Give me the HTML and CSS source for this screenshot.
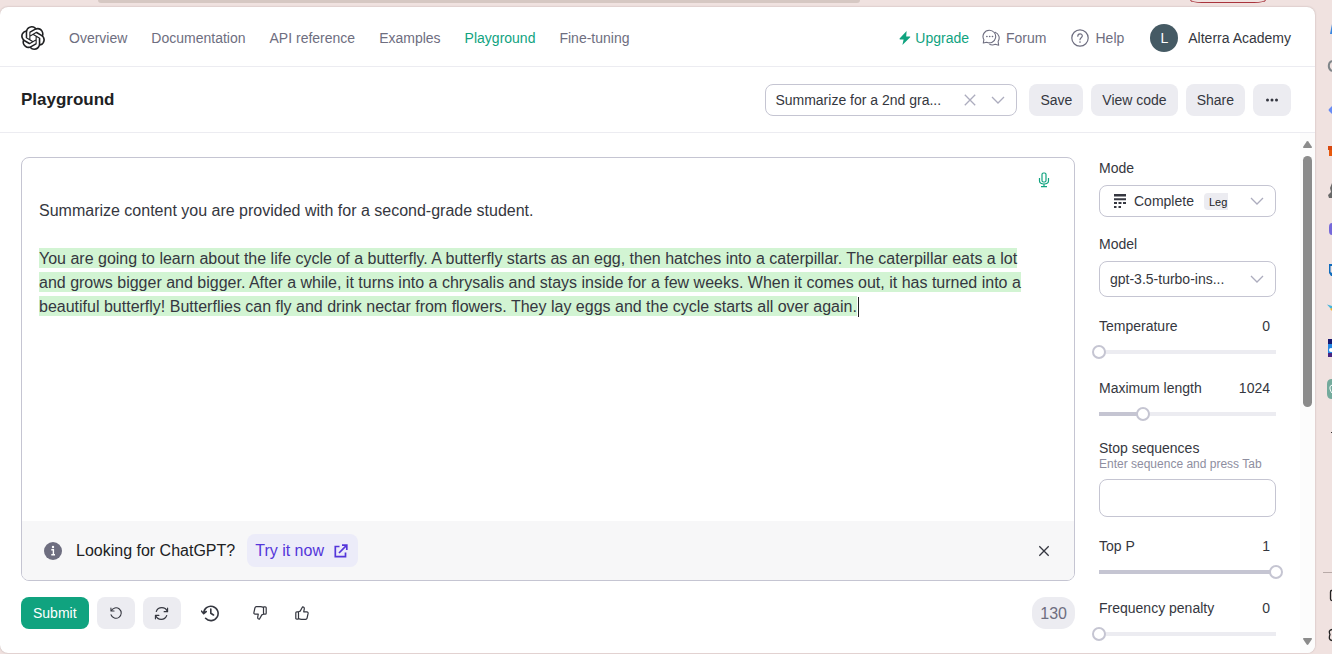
FILE: index.html
```html
<!DOCTYPE html>
<html lang="en">
<head>
<meta charset="utf-8">
<title>Playground</title>
<link rel="stylesheet" href="styles.css">
</head>
<body>
<div class="chrome-top"><span class="address-edge"></span><span class="profile-edge"></span></div>
<div class="frame">
<div class="app">
  <header class="topnav">
    <a class="logo" href="#" aria-label="Home"><svg width="24" height="24" viewBox="0 0 24 24" fill="#202123"><path d="M22.2819 9.8211a5.9847 5.9847 0 0 0-.5157-4.9108 6.0462 6.0462 0 0 0-6.5098-2.9A6.0651 6.0651 0 0 0 4.9807 4.1818a5.9847 5.9847 0 0 0-3.9977 2.9 6.0462 6.0462 0 0 0 .7427 7.0966 5.98 5.98 0 0 0 .511 4.9107 6.051 6.051 0 0 0 6.5146 2.9001A5.9847 5.9847 0 0 0 13.2599 24a6.0557 6.0557 0 0 0 5.7718-4.2058 5.9894 5.9894 0 0 0 3.9977-2.9001 6.0557 6.0557 0 0 0-.7475-7.0729zm-9.022 12.6081a4.4755 4.4755 0 0 1-2.8764-1.0408l.1419-.0804 4.7783-2.7582a.7948.7948 0 0 0 .3927-.6813v-6.7369l2.02 1.1686a.071.071 0 0 1 .038.052v5.5826a4.504 4.504 0 0 1-4.4945 4.4944zm-9.6607-4.1254a4.4708 4.4708 0 0 1-.5346-3.0137l.142.0852 4.783 2.7582a.7712.7712 0 0 0 .7806 0l5.8428-3.3685v2.3324a.0804.0804 0 0 1-.0332.0615L9.74 19.9502a4.4992 4.4992 0 0 1-6.1408-1.6464zM2.3408 7.8956a4.485 4.485 0 0 1 2.3655-1.9728V11.6a.7664.7664 0 0 0 .3879.6765l5.8144 3.3543-2.0201 1.1685a.0757.0757 0 0 1-.071 0l-4.8303-2.7865A4.504 4.504 0 0 1 2.3408 7.872zm16.5963 3.8558L13.1038 8.364 15.1192 7.2a.0757.0757 0 0 1 .071 0l4.8303 2.7913a4.4944 4.4944 0 0 1-.6765 8.1042v-5.6772a.79.79 0 0 0-.407-.667zm2.0107-3.0231l-.142-.0852-4.7735-2.7818a.7759.7759 0 0 0-.7854 0L9.409 9.2297V6.8974a.0662.0662 0 0 1 .0284-.0615l4.8303-2.7866a4.4992 4.4992 0 0 1 6.6802 4.66zM8.3065 12.863l-2.02-1.1638a.0804.0804 0 0 1-.038-.0567V6.0742a4.4992 4.4992 0 0 1 7.3757-3.4537l-.142.0805L8.704 5.459a.7948.7948 0 0 0-.3927.6813zm1.0976-2.3654l2.602-1.4998 2.6069 1.4998v2.9994l-2.5974 1.4997-2.6067-1.4997Z"/></svg></a>
    <nav class="links">
      <a href="#">Overview</a>
      <a href="#">Documentation</a>
      <a href="#">API reference</a>
      <a href="#">Examples</a>
      <a href="#" class="current" aria-current="page">Playground</a>
      <a href="#">Fine-tuning</a>
    </nav>
    <div class="account">
      <a href="#" class="upgrade"><svg width="12" height="14" viewBox="0 0 12 14" fill="#10a37f"><path d="M7.6 0 0.6 7.6Q.2 8.3 1 8.4H4.6L3.4 14 11.2 6.3Q11.6 5.6 10.8 5.5H7.2Z"/></svg>Upgrade</a>
      <a href="#" class="forum"><svg width="18" height="18" viewBox="0 0 18 18" fill="none" stroke="#6e6e80" stroke-width="1.1" stroke-linejoin="round" stroke-linecap="round"><path d="M7.3 1.2a6.3 6.3 0 1 1-2.6 12L1.3 14 1.9 10.700A6.300 6.300 0 0 1 7.300 1.200Z"/><path d="M13.100 3.200A6.200 6.200 0 0 1 16.100 12.500L16.700 16.300 13.300 15.300A7 7 0 0 1 7.800 15.600"/><path d="M4.800 7.400h.2M7.600 7.400h.2M10.400 7.400h.2" stroke-width="1.500"/></svg>Forum</a>
      <a href="#" class="help"><svg width="18" height="18" viewBox="0 0 18 18" fill="none" stroke="#6e6e80" stroke-width="1.200" stroke-linecap="round"><circle cx="9" cy="9" r="8.200"/><path d="M6.800 7.200C6.800 4 11.400 4.200 11.300 7 11.200 8.800 9 8.700 9 10.700"/><path d="M9 13v.1" stroke-width="1.600"/></svg>Help</a>
      <a href="#" class="user"><span class="avatar">L</span>Alterra Academy</a>
    </div>
  </header>

  <div class="toolbar">
    <h1>Playground</h1>
    <div class="box preset">
      <select aria-label="Preset"><option>Summarize for a 2nd gra...</option></select>
      <button class="bare" aria-label="Clear preset"><svg width="12" height="12" viewBox="0 0 12 12" fill="none" stroke="#acacbe" stroke-width="1.300"><path d="M.8.8 11.200 11.200M11.200.8.8 11.200"/></svg></button>
      <svg class="chevron" width="14" height="8" viewBox="0 0 14 8"><path d="M1 1 7 7 13 1"/></svg>
    </div>
    <button class="btn">Save</button>
    <button class="btn">View code</button>
    <button class="btn">Share</button>
    <button class="btn square" aria-label="More"><svg width="14" height="4" viewBox="0 0 14 4" fill="#353740"><circle cx="2.500" cy="2" r="1.500"/><circle cx="7" cy="2" r="1.500"/><circle cx="11.500" cy="2" r="1.500"/></svg></button>
  </div>

  <div class="body">
    <main class="work">
      <div class="editor">
        <button class="bare mic" aria-label="Dictate"><svg width="12" height="16" viewBox="0 0 12 16" fill="none" stroke="#10a37f" stroke-width="1.200"><rect x="4" y="1" width="4" height="9" rx="1.500"/><path d="M1.500 6v2.800Q1.500 12 6 12T10.500 8.800V6M6 12v2.500M3 14.700h6"/></svg></button>
        <div class="prompt" role="textbox" aria-multiline="true" aria-label="Prompt" contenteditable="true" spellcheck="false"><p>Summarize content you are provided with for a second-grade student.</p><p><mark>You are going to learn about the life cycle of a butterfly. A butterfly starts as an egg, then hatches into a caterpillar. The caterpillar eats a lot and grows bigger and bigger. After a while, it turns into a chrysalis and stays inside for a few weeks. When it comes out, it has turned into a beautiful butterfly! Butterflies can fly and drink nectar from flowers. They lay eggs and the cycle starts all over again.</mark><span class="caret"></span></p></div>
        <div class="banner">
          <svg width="18" height="18" viewBox="0 0 18 18"><circle cx="9" cy="9" r="9" fill="#6e6e80"/><path d="M7.300 7.800H9.400V12.800M7.300 12.800H11" fill="none" stroke="#fff" stroke-width="1.400"/><circle cx="9" cy="5" r="1.200" fill="#fff"/></svg>
          <span>Looking for ChatGPT?</span>
          <a href="#" class="try">Try it now<svg width="14" height="14" viewBox="0 0 14 14" fill="none" stroke="#5436da" stroke-width="1.700"><path d="M5.500 2.500H1.300V12.700H11.500V8.500M5 9 12.300 1.700M8 1.200H12.800V6"/></svg></a>
          <button class="bare" aria-label="Dismiss"><svg width="12" height="12" viewBox="0 0 12 12" stroke="#353740" stroke-width="1.300"><path d="M1.300 1.300 10.700 10.700M10.700 1.300 1.300 10.700"/></svg></button>
        </div>
      </div>
      <div class="actions">
        <button class="btn primary">Submit</button>
        <button class="btn square" aria-label="Undo"><svg class="ico" width="14" height="14" viewBox="0 0 16 16"><path d="M2.200 2.200V5.800H5.800M2.500 5.600A6 6 0 1 1 2.300 10"/></svg></button>
        <button class="btn square" aria-label="Regenerate"><svg class="ico" width="15" height="15" viewBox="0 0 16 16"><path d="M14.500 2.300V6H10.800M14.200 5.800A6.300 6.300 0 0 0 2.400 5.800M1.500 13.700V10H5.200M1.800 10.200A6.300 6.300 0 0 0 13.600 10.200"/></svg></button>
        <button class="bare history" aria-label="History"><svg class="ico" width="18" height="18" viewBox="0 0 18 18"><path stroke-width="1.600" d="M2.700 9.500A7.200 7.200 0 1 1 4.600 14.300M.5 7.200 2.700 9.700 5.200 7.600M9.800 5V9.300L12.500 11"/></svg></button>
        <button class="bare down" aria-label="Thumbs down"><svg class="ico" width="14" height="14" viewBox="0 0 14 14"><path d="M10.500 8.200V1.600Q10.500.8 11.300.8H12.200Q13.200.8 13.200 1.800V7.200Q13.200 8.200 12.200 8.200ZM10.500 1.400Q8.900.7 7.500.7H3.400Q2.200.7 1.900 2L.9 6.600Q.7 8 2.200 8.200H5.300L4.700 11.200Q4.600 13.200 6.400 13.200L8.800 8.900 10.500 8.200"/></svg></button>
        <button class="bare" aria-label="Thumbs up"><svg class="ico" width="14" height="14" viewBox="0 0 14 14"><path d="M3.500 5.800V12.400Q3.500 13.200 2.700 13.200H1.800Q.8 13.200.8 12.200V6.800Q.8 5.800 1.800 5.800ZM3.500 12.600Q5.100 13.300 6.500 13.300H10.600Q11.800 13.300 12.100 12L13.100 7.400Q13.300 6 11.800 5.800H8.700L9.300 2.800Q9.400.8 7.600.8L5.200 5.100 3.500 5.800"/></svg></button>
        <span class="count">130</span>
      </div>
    </main>

    <aside class="settings">
      <label for="mode">Mode</label>
      <div class="box mode">
        <svg width="14" height="14" viewBox="0 0 14 14" fill="#353740"><path d="M1 0h12v2.500H1zM1 4.200h12v2H1zM1 8h3v2H1zM5.500 8h3v2h-3zM10 8h3v2h-3zM1 12h2.500v2H1zM5.500 12H8v2H5.500z"/></svg>
        <select id="mode"><option>Complete</option></select>
        <span class="tag">Leg</span>
        <svg class="chevron" width="14" height="8" viewBox="0 0 14 8"><path d="M1 1 7 7 13 1"/></svg>
      </div>
      <label for="model">Model</label>
      <div class="box model">
        <select id="model"><option>gpt-3.5-turbo-ins...</option></select>
        <svg class="chevron" width="14" height="8" viewBox="0 0 14 8"><path d="M1 1 7 7 13 1"/></svg>
      </div>
      <div class="row"><label for="temp">Temperature</label><output for="temp">0</output></div>
      <input type="range" id="temp" min="0" max="2" value="0" style="--fill:0%">
      <div class="row"><label for="len">Maximum length</label><output for="len">1024</output></div>
      <input type="range" id="len" min="1" max="4096" value="1024" style="--fill:25%">
      <label class="stop" for="stop">Stop sequences</label>
      <small>Enter sequence and press Tab</small>
      <input type="text" id="stop">
      <div class="row"><label for="topp">Top P</label><output for="topp">1</output></div>
      <input type="range" id="topp" min="0" max="1" value="1" style="--fill:100%">
      <div class="row"><label for="freq">Frequency penalty</label><output for="freq">0</output></div>
      <input type="range" id="freq" min="0" max="2" value="0" style="--fill:0%">
    </aside>

    <div class="scroll" aria-hidden="true">
      <svg width="9" height="7" viewBox="0 0 9 7" fill="#8b8b8b"><path d="M3.700.5Q4.500-.3 5.300.5L9 6Q9 7 8.200 7H.8Q0 7 0 6Z"/></svg>
      <span class="track"><span class="thumb"></span></span>
      <svg width="9" height="7" viewBox="0 0 9 7" fill="#8b8b8b"><path d="M3.700 6.500Q4.500 7.300 5.300 6.500L9 1Q9 0 8.200 0H.8Q0 0 0 1Z"/></svg>
    </div>
  </div>
</div>
<div class="dock" aria-hidden="true">
  <svg width="17" height="640" viewBox="-1 7 17 640">
    <path d="M16 24 14 34H16Z" fill="#3986e0"/>
    <path d="M16 61a5.500 5.500 0 0 0 0 10" fill="none" stroke="#80868a" stroke-width="2"/>
    <path d="M16 106 13 109Q12 110 13 111L16 114Z" fill="#688cf5"/>
    <path d="M12 146h4v4h-4z" fill="#d9480f"/><path d="M13 150h3v6h-3z" fill="#e8590c"/>
    <path d="M16 183 14 188 15 192 12 195 13 198H16Z" fill="#696969"/>
    <path d="M16 223Q13 223 13 227V231Q13 235 16 235Z" fill="#7668d9"/>
    <path d="M16 264H13V273L15 276H16V273L14.500 272V266H16Z" fill="#0f6cbd"/>
    <path d="M11 304.500 16 306V310Z" fill="#45b5dc"/><path d="M14 309 16 308V311Z" fill="#f5b82e"/>
    <path d="M12 339h4v5h-4z" fill="#191972"/><path d="M12 344h4v9h-4z" fill="#2488e4"/><path d="M12 353h4v4h-4z" fill="#472482"/><circle cx="15" cy="350" r="2" fill="#fff"/>
    <path d="M16 379Q11 379 11 384V394Q11 399 16 399Z" fill="#74aa9c"/><path d="M16 385Q13 386 14 389T16 393" fill="none" stroke="#fff"/>
    <path d="M15 432.500h1" stroke="#333"/>
    <path d="M7 572.500h9" stroke="#b8aaa8"/>
    <path d="M16 590.500H15.500Q14.500 590.500 14.500 592V599Q14.500 600.500 16 600.500" fill="none" stroke="#222" stroke-width="1.300"/>
    <path d="M16 629.500Q12 630 14 634.500 12 640 16 640.500" fill="none" stroke="#222" stroke-width="1.300"/>
  </svg>
</div>
</div>
</body>
</html>
```
FILE: styles.css
```css
* { box-sizing: border-box; }
body {
  margin: 0;
  min-height: 100vh;
  display: flex;
  flex-direction: column;
  background: #f0e2e0;
  color: #353740;
  font: 14px/20px "Liberation Sans", Arial, sans-serif;
}
a { color: inherit; text-decoration: none; }
svg { display: block; flex: none; }
button, input, select { font: inherit; color: inherit; }
p, h1 { margin: 0; }

.chrome-top { height: 7px; display: flex; align-items: flex-start; padding: 0 66px 0 98px; overflow: hidden; }
.address-edge { width: 66%; max-width: 762px; height: 3px; background: #d6c8c3; border-radius: 0 0 8px 8px; }
.profile-edge { width: 76px; height: 3px; margin-left: auto; border: 1px solid #a9343d; border-top: 0; border-radius: 0 0 16px 16px / 0 0 4px 4px; }

.frame { flex: 1; display: flex; }
.app {
  flex: 1;
  min-width: 0;
  display: flex;
  flex-direction: column;
  background: #fff;
  border-radius: 8px;
  margin-bottom: 1px;
  box-shadow: 0 0 2px #b9a9a7;
}
.dock { width: 17px; overflow: hidden; }

.topnav { height: 60px; display: flex; align-items: center; padding: 2px 24px 0 21px; border-bottom: 1px solid #ececf1; }
.logo { margin-right: 24px; }
.links { display: flex; gap: 24px; color: #6e6e80; }
.links .current { color: #10a37f; }
.account { margin-left: auto; display: flex; align-items: center; color: #6e6e80; }
.account a { display: flex; align-items: center; gap: 6px; }
.account .upgrade { color: #10a37f; gap: 4px; margin-right: 13px; }
.account .forum { margin-right: 25px; }
.account .help { margin-right: 26px; }
.account .user { color: #353740; gap: 10px; }
.avatar { width: 28px; height: 28px; border-radius: 50%; background: #455a64; color: #fff; display: grid; place-items: center; }

.toolbar { height: 66px; display: flex; align-items: center; gap: 8px; padding: 0 24px 0 21px; border-bottom: 1px solid #ececf1; }
.toolbar h1 { margin-right: auto; font-size: 17px; line-height: 24px; color: #202123; }
.btn { height: 32px; border: 0; border-radius: 8px; background: #ececf1; padding: 0 11px; font-size: 14px; }
.square { width: 38px; padding: 0; display: grid; place-items: center; }
.bare { border: 0; background: none; padding: 0; }
.primary { padding: 0 12px; background: #10a37f; color: #fff; }

.box { display: flex; align-items: center; height: 32px; border: 1px solid #c5c5d2; border-radius: 8px; background: #fff; }
.box select { appearance: none; border: 0; background: none; padding: 0; flex: 1; min-width: 0; outline: 0; }
.chevron { fill: none; stroke: #acacbe; stroke-width: 1.300; pointer-events: none; }
.preset { width: 252px; padding: 0 11px 0 9px; margin-right: 4px; gap: 15px; }

.body { flex: 1; display: flex; }
.work { flex: 1; min-width: 0; display: flex; flex-direction: column; padding: 24px 24px 24px 21px; }
.editor { flex: 1; display: flex; flex-direction: column; border: 1px solid #c5c5d2; border-radius: 8px; overflow: hidden; }
.mic { align-self: flex-end; margin: 14px 24px 0 0; }
.prompt { flex: 1; padding: 11px 48px 0 17px; font-size: 16px; line-height: 24px; outline: 0; }
.prompt p + p { margin-top: 24px; }
.prompt mark { background: #d2f4d3; color: inherit; padding: 2px 0 1px; }
.caret { display: inline-block; width: 1px; height: 20px; margin-left: 1px; background: #202123; vertical-align: -5px; }
.banner { display: flex; align-items: center; height: 59px; padding: 0 24px 0 22px; background: #f7f7f8; color: #202123; font-size: 16px; }
.banner span { margin: 0 12px 0 14px; }
.try { display: flex; align-items: center; gap: 10px; height: 33px; padding: 0 10px 0 8px; border-radius: 8px; background: #ececf9; color: #5436da; }
.banner .bare { margin-left: auto; }

.actions { display: flex; align-items: center; gap: 8px; margin-top: 16px; }
.ico { fill: none; stroke: #353740; stroke-width: 1.200; stroke-linejoin: round; stroke-linecap: round; }
.history { margin-left: 12px; }
.down { margin: 0 20px 0 26px; }
.count { margin-left: auto; height: 32px; padding: 0 8px; border-radius: 14px; background: #ececf1; color: #6e6e80; font-size: 16px; line-height: 34px; }

.settings { width: 177px; display: flex; flex-direction: column; padding-top: 25px; }
.mode { margin: 7px 0 17px; padding: 0 11px 0 13px; }
.mode select { margin-left: 7px; flex: none; }
.tag { width: 24px; height: 17px; margin: 0 auto 0 10px; padding-left: 5px; overflow: hidden; border-radius: 4px 0 0 4px; background: #ececf1; color: #202123; font-size: 11px; line-height: 18px; }
.model { height: 36px; margin: 7px 0 19px; padding: 0 11px 0 10px; }
.row { display: flex; justify-content: space-between; padding-right: 6px; }
input[type="range"] {
  appearance: none;
  width: auto;
  height: 14px;
  margin: 9px -7px 19px;
  background: linear-gradient(to right, #c5c5d2 var(--fill), #ececf1 var(--fill)) center / calc(100% - 14px) 4px no-repeat;
}
input[type="range"]:last-child { margin-bottom: 0; }
input[type="range"]::-webkit-slider-thumb {
  appearance: none;
  width: 14px;
  height: 14px;
  border: 2px solid #c5c5d2;
  border-radius: 50%;
  background: #fff;
}
.settings .stop { line-height: 16px; }
.settings small { color: #8e8ea0; font-size: 12px; line-height: 16px; }
input[type="text"] { width: 100%; height: 38px; margin: 7px 0 19px; padding: 0 10px; border: 1px solid #c5c5d2; border-radius: 8px; }

.scroll { width: 15px; margin-left: 24px; padding: 8px 0; display: flex; flex-direction: column; align-items: center; gap: 8px; background: #fcfcfc; border-radius: 0 0 8px 0; }
.track { flex: 1; width: 9px; }
.thumb { display: block; height: 53%; min-height: 40px; border-radius: 5px; background: #8b8b8b; }
```
